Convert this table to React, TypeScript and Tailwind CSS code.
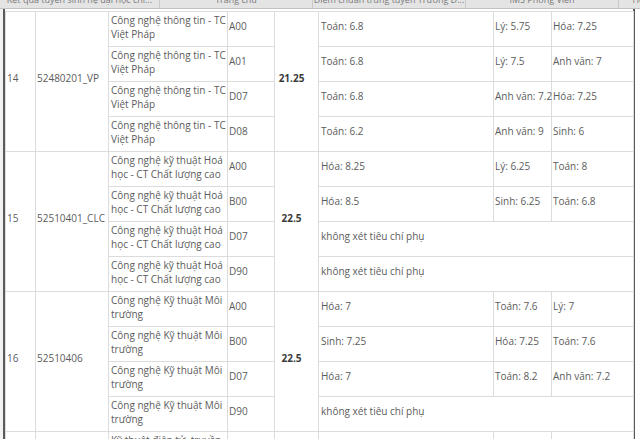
import React from "react";

type Row = {
  name: [string, string];
  combo: string;
  extra: string[] | null;
};

type Group = {
  stt: string;
  code: string;
  score: string;
  rows: Row[];
};

const tabs = [
  { label: "Kết quả tuyển sinh hệ đại học chí...", w: "w-[160px]" },
  { label: "Trang chủ", w: "w-[153px]" },
  { label: "Điểm chuẩn trúng tuyển Trường Đ...", w: "w-[153px]" },
  { label: "IMS Phòng Viên", w: "w-[153px]" },
  { label: "Ho", w: "w-[40px]" },
];

const groups: Group[] = [
  {
    stt: "14",
    code: "52480201_VP",
    score: "21.25",
    rows: [
      { name: ["Công nghệ thông tin - TC", "Việt Pháp"], combo: "A00", extra: ["Toán: 6.8", "Lý: 5.75", "Hóa: 7.25"] },
      { name: ["Công nghệ thông tin - TC", "Việt Pháp"], combo: "A01", extra: ["Toán: 6.8", "Lý: 7.5", "Anh văn: 7"] },
      { name: ["Công nghệ thông tin - TC", "Việt Pháp"], combo: "D07", extra: ["Toán: 6.8", "Anh văn: 7.2", "Hóa: 7.25"] },
      { name: ["Công nghệ thông tin - TC", "Việt Pháp"], combo: "D08", extra: ["Toán: 6.2", "Anh văn: 9", "Sinh: 6"] },
    ],
  },
  {
    stt: "15",
    code: "52510401_CLC",
    score: "22.5",
    rows: [
      { name: ["Công nghệ kỹ thuật Hoá", "học - CT Chất lượng cao"], combo: "A00", extra: ["Hóa: 8.25", "Lý: 6.25", "Toán: 8"] },
      { name: ["Công nghệ kỹ thuật Hoá", "học - CT Chất lượng cao"], combo: "B00", extra: ["Hóa: 8.5", "Sinh: 6.25", "Toán: 6.8"] },
      { name: ["Công nghệ kỹ thuật Hoá", "học - CT Chất lượng cao"], combo: "D07", extra: null },
      { name: ["Công nghệ kỹ thuật Hoá", "học - CT Chất lượng cao"], combo: "D90", extra: null },
    ],
  },
  {
    stt: "16",
    code: "52510406",
    score: "22.5",
    rows: [
      { name: ["Công nghệ Kỹ thuật Môi", "trường"], combo: "A00", extra: ["Hóa: 7", "Toán: 7.6", "Lý: 7"] },
      { name: ["Công nghệ Kỹ thuật Môi", "trường"], combo: "B00", extra: ["Sinh: 7.25", "Hóa: 7.25", "Toán: 7.6"] },
      { name: ["Công nghệ Kỹ thuật Môi", "trường"], combo: "D07", extra: ["Hóa: 7", "Toán: 8.2", "Anh văn: 7.2"] },
      { name: ["Công nghệ Kỹ thuật Môi", "trường"], combo: "D90", extra: null },
    ],
  },
];

const cell = "border border-[#dcdcdc] align-middle pb-[6px] whitespace-nowrap";
const extraPad = ["pl-[2px]", "pl-[1px]", "pl-[1px]"];

const App = () => {
  return (
    <div
      className="w-[640px] h-[439px] overflow-hidden bg-white text-[#5c5c5c]"
      style={{ fontFamily: '"Open Sans", "Liberation Sans", sans-serif' }}
    >
      {/* tab strip, mostly scrolled off the top */}
      <div className="flex h-[9px] overflow-hidden bg-[#e4e4e4] border-b border-[#c2c2c2]">
        {tabs.map((tab) => (
          <div
            key={tab.label}
            className={`${tab.w} shrink-0 border-r border-[#c9c9c9] text-center text-[9px] leading-[12px] text-[#7a7a7a] -mt-[6px] overflow-hidden whitespace-nowrap`}
          >
            {tab.label}
          </div>
        ))}
      </div>

      <div className="flex">
        <div className="w-[3px] bg-[#f2f2f2] shrink-0" />
        <div className="w-[632px] border-l-2 border-r-2 border-[#5a5a5a] pt-[2px] h-[430px] shrink-0">
          <table className="table-fixed border-collapse w-[628px] text-[10px]">
            <colgroup>
              <col className="w-[30px]" />
              <col className="w-[73px]" />
              <col className="w-[119px]" />
              <col className="w-[47px]" />
              <col className="w-[44px]" />
              <col className="w-[175px]" />
              <col className="w-[58px]" />
              <col className="w-[82px]" />
            </colgroup>
            <tbody>
              {groups.map((g) =>
                g.rows.map((r, i) => (
                  <tr key={g.stt + r.combo} className="h-[35px]">
                    {i === 0 && (
                      <>
                        <td rowSpan={4} className={`${cell} pl-[1px]`}>
                          {g.stt}
                        </td>
                        <td rowSpan={4} className={`${cell} pl-[1px]`}>
                          {g.code}
                        </td>
                      </>
                    )}
                    <td className="border border-[#dcdcdc] align-top pt-[1px] pl-[2px] leading-[14px] whitespace-nowrap">
                      {r.name[0]}
                      <br />
                      {r.name[1]}
                    </td>
                    <td className={`${cell} pl-[1px]`}>{r.combo}</td>
                    {i === 0 && (
                      <td rowSpan={4} className={`${cell} text-center pr-[10px] font-bold text-[#3a3a3a]`}>
                        {g.score}
                      </td>
                    )}
                    {r.extra ? (
                      r.extra.map((e, k) => (
                        <td key={k} className={`${cell} ${extraPad[k]}`}>
                          {e}
                        </td>
                      ))
                    ) : (
                      <td colSpan={3} className={`${cell} pl-[2px]`}>
                        không xét tiêu chí phụ
                      </td>
                    )}
                  </tr>
                ))
              )}
              <tr className="h-[35px]">
                <td className={cell} />
                <td className={cell} />
                <td className="border border-[#dcdcdc] align-top pt-[1px] pl-[2px] leading-[14px] whitespace-nowrap">
                  Kỹ thuật điện tử, truyền
                  <br />
                  thông
                </td>
                <td className={cell} />
                <td className={cell} />
                <td className={cell} />
                <td className={cell} />
                <td className={cell} />
              </tr>
            </tbody>
          </table>
        </div>
      </div>
    </div>
  );
};

export default App;
